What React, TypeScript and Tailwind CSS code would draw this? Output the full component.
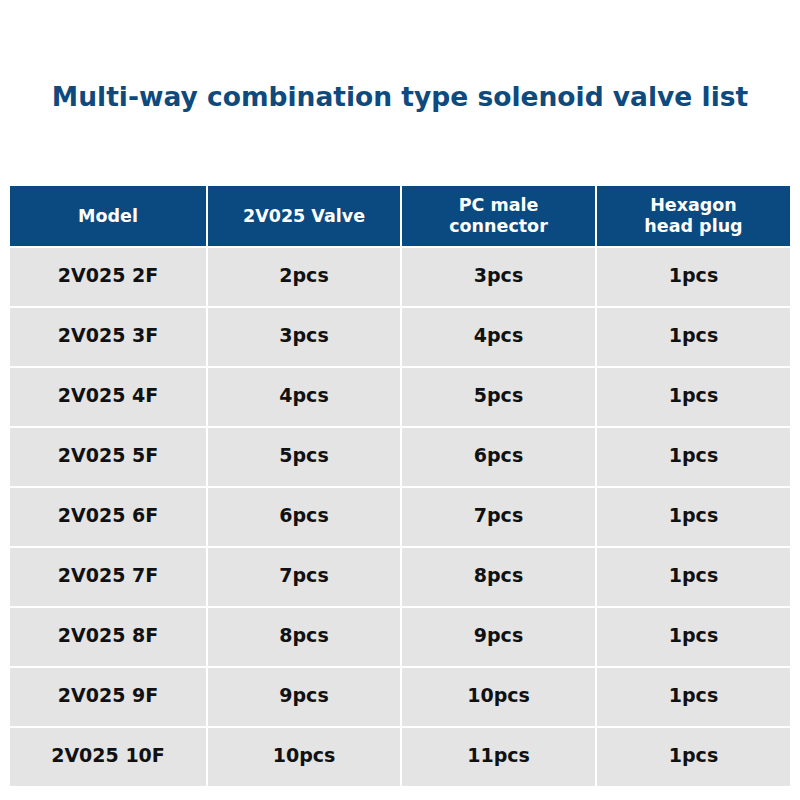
const rows = [
  ["2V025 2F", "2pcs", "3pcs", "1pcs"],
  ["2V025 3F", "3pcs", "4pcs", "1pcs"],
  ["2V025 4F", "4pcs", "5pcs", "1pcs"],
  ["2V025 5F", "5pcs", "6pcs", "1pcs"],
  ["2V025 6F", "6pcs", "7pcs", "1pcs"],
  ["2V025 7F", "7pcs", "8pcs", "1pcs"],
  ["2V025 8F", "8pcs", "9pcs", "1pcs"],
  ["2V025 9F", "9pcs", "10pcs", "1pcs"],
  ["2V025 10F", "10pcs", "11pcs", "1pcs"],
];

const headers = [["Model"], ["2V025 Valve"], ["PC male", "connector"], ["Hexagon", "head plug"]];

export default function App() {
  return (
    <div className="h-[800px] w-[800px] bg-white font-['DejaVu_Sans',sans-serif]">
      <h1 className="pt-[78px] text-center text-[26.5px] font-bold leading-[38px] text-[#0e4a7e]">
        Multi-way combination type solenoid valve list
      </h1>
      <div className="mx-[10px] mt-[70px] grid grid-cols-[196px_192px_193px_1fr] gap-[2px] bg-white">
        {headers.map((h) => (
          <div
            key={h.join(" ")}
            className="flex h-[60px] flex-col items-center justify-center bg-[#0b4a80] text-center text-[17.5px] font-bold leading-[21px] text-white"
          >
            {h.map((line) => (
              <span key={line} className="whitespace-nowrap">
                {line}
              </span>
            ))}
          </div>
        ))}
        {rows.flatMap((r, i) =>
          r.map((c, j) => (
            <div
              key={`${i}-${j}`}
              className="flex h-[58px] items-center justify-center bg-[#e4e4e4] pb-[3px] text-[19px] font-bold text-[#111]"
            >
              {c}
            </div>
          ))
        )}
      </div>
    </div>
  );
}
